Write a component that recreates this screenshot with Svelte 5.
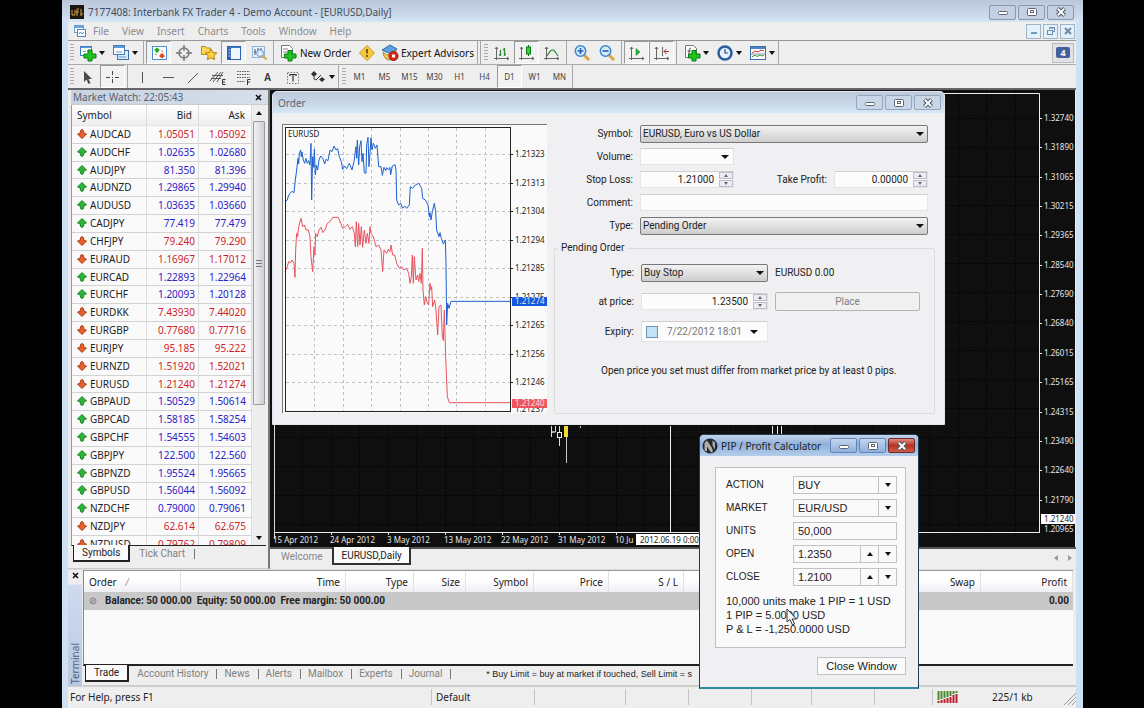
<script>
  const quotes = [
    ['AUDCAD', '1.05051', '1.05092', 0], ['AUDCHF', '1.02635', '1.02680', 1],
    ['AUDJPY', '81.350', '81.396', 1], ['AUDNZD', '1.29865', '1.29940', 1],
    ['AUDUSD', '1.03635', '1.03660', 1], ['CADJPY', '77.419', '77.479', 1],
    ['CHFJPY', '79.240', '79.290', 0], ['EURAUD', '1.16967', '1.17012', 0],
    ['EURCAD', '1.22893', '1.22964', 1], ['EURCHF', '1.20093', '1.20128', 1],
    ['EURDKK', '7.43930', '7.44020', 0], ['EURGBP', '0.77680', '0.77716', 0],
    ['EURJPY', '95.185', '95.222', 0], ['EURNZD', '1.51920', '1.52021', 0],
    ['EURUSD', '1.21240', '1.21274', 0], ['GBPAUD', '1.50529', '1.50614', 1],
    ['GBPCAD', '1.58185', '1.58254', 1], ['GBPCHF', '1.54555', '1.54603', 1],
    ['GBPJPY', '122.500', '122.560', 1], ['GBPNZD', '1.95524', '1.95665', 1],
    ['GBPUSD', '1.56044', '1.56092', 1], ['NZDCHF', '0.79000', '0.79061', 1],
    ['NZDJPY', '62.614', '62.675', 0], ['NZDUSD', '0.79762', '0.79809', 0]
  ];
  const menus = ['File', 'View', 'Insert', 'Charts', 'Tools', 'Window', 'Help'];
  const frames = ['M1', 'M5', 'M15', 'M30', 'H1', 'H4', 'D1', 'W1', 'MN'];
  const prices = ['1.32740', '1.31890', '1.31065', '1.30215', '1.29365', '1.28540', '1.27690', '1.26840', '1.26015', '1.25165', '1.24315', '1.23490', '1.22640', '1.21790'];
  const dates = ['15 Apr 2012', '24 Apr 2012', '3 May 2012', '13 May 2012', '22 May 2012', '31 May 2012', '10 Ju'];
  const ticks = ['1.21323', '1.21313', '1.21304', '1.21294', '1.21285', '1.21275', '1.21265', '1.21256', '1.21246'];
  const tabs = ['Account History', 'News', 'Alerts', 'Mailbox', 'Experts', 'Journal'];
  const askLine = '45,335 52,330 55,318 60,310 66,304 72,308 76,270 80,240 84,205 86,222 88,190 92,180 94,200 96,186 100,210 104,220 108,205 112,220 116,212 120,225 123,160 125,330 128,200 131,232 133,178 136,255 139,225 143,240 147,210 152,198 158,204 164,222 168,208 174,212 180,180 186,185 192,168 198,180 203,176 208,200 214,215 218,238 224,228 230,236 238,220 246,240 252,215 258,170 260,205 262,150 266,225 269,170 273,152 276,215 279,190 283,248 288,250 290,165 294,142 297,230 300,190 303,143 306,180 310,160 316,175 321,165 326,230 333,230 337,256 342,232 347,242 350,233 356,240 360,232 362,254 367,228 375,224 378,240 380,330 386,345 392,340 398,355 404,348 410,355 418,345 421,290 428,295 436,285 446,280 455,295 458,325 466,330 474,345 478,380 480,368 483,390 487,365 493,340 497,365 500,420 507,440 510,428 514,445 520,462 526,450 528,520 530,705 533,640 537,655 543,634 722,634';
  const bidLine = '45,545 52,530 56,515 62,518 66,510 72,520 75,562 77,480 80,430 83,440 86,410 93,385 98,410 103,405 108,420 115,420 120,440 123,500 128,545 132,470 135,495 137,430 142,440 147,420 153,412 158,428 165,420 172,400 180,395 188,382 205,382 212,400 218,415 226,410 233,403 240,418 247,410 253,430 256,470 259,395 263,470 266,400 270,465 274,410 278,472 283,420 288,460 292,430 297,460 300,410 303,430 310,440 318,470 326,465 333,480 338,545 342,480 350,490 355,478 360,485 363,465 368,495 374,495 380,520 388,535 395,530 402,540 410,535 416,550 420,580 424,560 427,495 430,580 433,500 438,570 443,555 446,575 450,550 454,580 457,475 459,600 463,645 467,620 472,640 476,645 480,580 483,600 485,590 488,650 494,630 498,660 503,735 507,650 513,645 517,740 520,752 523,660 527,800 532,920 538,938 722,938';
  let symbol = $state('EURUSD, Euro vs US Dollar');
  let stopLoss = $state('1.21000');
  let takeProfit = $state('0.00000');
  let atPrice = $state('1.23500');
</script>

{#snippet icon(name)}
  <svg class="ico" viewBox="0 0 18 18" width="18" height="18" fill="none" aria-hidden="true">
    {#if name === 'newchart'}
      <rect x="1.5" y="2.5" width="11" height="9" fill="#fff" stroke="#3f7fc0" /><path d="M2 3.5h10" stroke="#5b9bd8" /><path d="M4 7.500h3M8 7h3" stroke="#5b8" />
      <path d="M9 6h4v4h4v4h-4v3H9v-3H5v-4h4z" fill="#1fc41f" stroke="#0a7a12" />
    {:else if name === 'profiles'}
      <rect x="5.500" y="6.500" width="11" height="9" fill="#dcebfa" stroke="#3f6fa8" /><rect x="1.500" y="1.500" width="11" height="9" fill="#fff" stroke="#3f7fc0" /><path d="M2 3h10" stroke="#5b9bd8" stroke-width="2" /><path d="M4 8h6M7 13h7" stroke="#5b9bd8" />
    {:else if name === 'watch'}
      <rect x="2.500" y="2.500" width="14" height="13" fill="#fff" stroke="#4a90d8" /><path d="M7 3.500L10 6 8.500 7v1.500h-3V7L4 6z" fill="#2a2" /><path d="M12 14.500L9 12l1.500-1V9.500h3V11l1.500 1z" fill="#d42" /><path d="M5 10l2 1M11 6l2 2" stroke="#d84" />
    {:else if name === 'cross'}
      <circle cx="9" cy="9" r="5" stroke="#777" stroke-width="1.500" /><path d="M9 1v6M9 11v6M1 9h6M11 9h6" stroke="#777" stroke-width="1.500" />
    {:else if name === 'navigator'}
      <path d="M1.500 10.500v-8h4l1 1.500h4v6.500z" fill="#ffd65c" stroke="#b98a1c" /><path d="M11 5l1.800 3.500 4 .5-3 2.700.8 4L11 13.800 7.400 15.700l.8-4L5.200 9l4-.5z" fill="#ffd23c" stroke="#b07b12" />
    {:else if name === 'terminal'}
      <rect x="2.500" y="2.500" width="13" height="13" fill="#eef5fd" stroke="#2b62b0" /><path d="M4.500 3v12" stroke="#2b62b0" stroke-width="3" /><path d="M3 3.500h12" stroke="#3a7bc8" /><path d="M3.500 6h2M3.500 9h2M3.500 12h2" stroke="#cde" />
    {:else if name === 'tester'}
      <rect x="2.500" y="2.500" width="12" height="11" fill="#eaf2fa" stroke="#8fb0d0" /><path d="M5 5v6M8 4v5M11 4v4M4 8h2M7 6h2" stroke="#557" /><circle cx="10" cy="9" r="3.500" stroke="#6a9ac8" fill="#d6ecfa" fill-opacity=".7" /><path d="M12.500 11.500l4 4" stroke="#d9a63c" stroke-width="2" />
    {:else if name === 'neworder'}
      <path d="M2.500 1.500h8l3 3v9h-11z" fill="#fff" stroke="#777" /><path d="M4 5h5M4 8h6" stroke="#888" /><path d="M9 6.500h4v3.500h4v4h-4v3H9v-3H5.500v-4H9z" fill="#1fc41f" stroke="#0a7a12" />
    {:else if name === 'alert'}
      <path d="M9 1.500L16.500 9 9 16.500 1.500 9z" fill="#f7c83a" stroke="#c39a20" /><path d="M9 5v4.500M9 11v2" stroke="#5a4300" stroke-width="1.600" />
    {:else if name === 'expert'}
      <path d="M1 6l8-5 7 4-6 5z" fill="#5aa3dc" stroke="#2d6ca8" /><path d="M2 8q3 4 8 3l5-5v6q-5 6-10 3-3-3-3-7z" fill="#f4c254" stroke="#b98a2c" /><circle cx="12.500" cy="12" r="4.500" fill="#d92a1c" stroke="#a01810" /><rect x="11" y="10.500" width="3" height="3" fill="#fff" />
    {:else if name === 'bars'}
      <path d="M3.500 3v13M1 14.500h15M2 5l1.500-2L5 5M14 13l2 1.500-2 1.500" stroke="#666" /><path d="M7.500 6v6M6 11h1.500M11.500 4v8M10 5.500h1.500M11.500 10H13" stroke="#2d8a3a" stroke-width="1.300" />
    {:else if name === 'candles'}
      <path d="M3.500 3v13M1 14.500h15M2 5l1.500-2L5 5M14 13l2 1.500-2 1.500" stroke="#666" /><path d="M10.500 1v11" stroke="#0a6a1a" /><rect x="8.500" y="3" width="4" height="7" fill="#2ed43a" stroke="#0a7a12" />
    {:else if name === 'linechart'}
      <path d="M3.500 3v13M1 14.500h15M2 5l1.500-2L5 5M14 13l2 1.500-2 1.500" stroke="#666" /><path d="M4 12q4-7 6-6t5 6" stroke="#2d8a3a" stroke-width="1.200" />
    {:else if name === 'zoomin' || name === 'zoomout'}
      <path d="M11 11l5 5" stroke="#d9a63c" stroke-width="3" /><circle cx="7.500" cy="7" r="5.200" fill="#d6ecfb" stroke="#3f86c8" stroke-width="1.500" /><path d={name === 'zoomin' ? 'M4.500 7h6M7.500 4v6' : 'M4.500 7h6'} stroke="#1f5fae" stroke-width="1.600" />
    {:else if name === 'autoscroll'}
      <path d="M3.500 3v13M1 14.500h15M2 5l1.500-2L5 5M14 13l2 1.500-2 1.500" stroke="#666" /><path d="M8 4.500l4 3.500-4 3.500z" fill="#25b03a" stroke="#16802a" stroke-width=".5" />
    {:else if name === 'shift'}
      <path d="M3.500 3v13M1 14.500h15M2 5l1.500-2L5 5M14 13l2 1.500-2 1.500M9.500 3v9" stroke="#666" /><path d="M16 7.500h-5M13.500 5L11 7.500l2.500 2.500" stroke="#a33" />
    {:else if name === 'indicator'}
      <path d="M2.500 1.500h8l3 3v9h-11z" fill="#fff" stroke="#777" /><path d="M8 4q-2 0-2 3v4M4.500 7H8" stroke="#555" /><path d="M9 6.500h4v3.500h4v4h-4v3H9v-3H5.500v-4H9z" fill="#1fc41f" stroke="#0a7a12" />
    {:else if name === 'clock'}
      <circle cx="9" cy="9" r="6.500" fill="#e4f1fb" stroke="#2a5e9e" stroke-width="2.500" /><path d="M9 5v4h3" stroke="#2a4a78" stroke-width="1.200" />
    {:else if name === 'template'}
      <rect x="1.500" y="2.500" width="15" height="13" fill="#fff" stroke="#3a6ea8" /><path d="M2 4h14" stroke="#4a88c8" stroke-width="2" /><path d="M3 9l3-2 3 1 3-2 3 1" stroke="#c33" /><path d="M3 13l3-2 2 1.500 3-1.500 2 1 2-1" stroke="#2a9a3a" /><path d="M2 10h14" stroke="#89a" />
    {:else if name === 'cursor'}
      <path d="M5 3v11l2.500-2.500L9.500 16l2-1-2-4H13z" fill="#4a4a4a" />
    {:else if name === 'plus'}
      <path d="M8.500 3v4M8.500 11v4M2 9.500h4M11 9.500h4M8 9.500h1" stroke="#444" />
    {:else if name === 'vline'}
      <path d="M8.500 4v11" stroke="#555" />
    {:else if name === 'hline'}
      <path d="M4 9.500h11" stroke="#555" />
    {:else if name === 'trend'}
      <path d="M4 15L14 5" stroke="#555" />
    {:else if name === 'channel'}
      <path d="M1 13l8-9M4 14l8-10M8 14l6-10M3 7.500h11M2 10.500h10" stroke="#555" /><path d="M16.500 11.500h-3v5h3M13.500 14H16" stroke="#333" />
    {:else if name === 'fibo'}
      <path d="M3 3.500h13M3 6.500h13M3 9.500h13M3 13.500h8" stroke="#555" stroke-dasharray="1.500 1" /><path d="M16.500 11.500h-3V17M13.500 14H16" stroke="#333" />
    {:else if name === 'label'}
      <rect x="3.500" y="4.500" width="11" height="11" stroke="#777" stroke-dasharray="1.500 1.500" /><path d="M5.500 6.500h7M6 6v2M12 6v2M9 6v7.500" stroke="#333" stroke-width="1.200" />
    {:else if name === 'arrows'}
      <path d="M5 3l3 3-3 3-3-3z" fill="#333" /><path d="M5 9v2l2 1 5-5" stroke="#333" /><path d="M13 9l3 2.500-3 2.500-3-2.500z" fill="#333" />
    {/if}
  </svg>
{/snippet}

{#snippet tool(name, label, drop = false, pressed = false)}
  <button class="tool" class:drop class:pressed aria-label={label}>{@render icon(name)}{#if drop}<i class="tri"></i>{/if}</button>
{/snippet}

{#snippet controls(kind)}
  <div class="controls {kind}">
    <button aria-label="Minimize"><svg width="12" height="10" viewBox="0 0 12 10" aria-hidden="true"><rect x="1.500" y="4.500" width="9" height="3" rx="1" fill="#fff" stroke="#5b6472" /></svg></button>
    <button aria-label="Maximize"><svg width="12" height="10" viewBox="0 0 12 10" aria-hidden="true"><rect x="1.500" y="1.500" width="9" height="7" rx="1" fill="#fff" stroke="#5b6472" /><rect x="4.500" y="3.500" width="3" height="2" fill="none" stroke="#5b6472" /></svg></button>
    <button class="shut" aria-label="Close"><svg width="12" height="10" viewBox="0 0 12 10" aria-hidden="true"><path d="M2.500 1.500L9.500 8.500M9.500 1.500L2.500 8.500" stroke="#4c5563" stroke-width="4" /><path d="M2.800 1.800L9.200 8.200M9.200 1.800L2.800 8.200" stroke="#fff" stroke-width="2" /></svg></button>
  </div>
{/snippet}

{#snippet stepper(label)}
  <span class="stepper">
    <button aria-label="Increase {label}"><i class="tri up"></i></button>
    <button aria-label="Decrease {label}"><i class="tri"></i></button>
  </span>
{/snippet}

<div class="app">
  <header class="titlebar">
    <svg width="14" height="14" viewBox="0 0 14 14" aria-hidden="true"><rect width="14" height="14" fill="#1c1710" /><path d="M2 5v5h3V5M7 11V4h2M6 7h3M11 4v7M12 8v2" fill="none" stroke="#d6a648" /></svg>
    <h1>7177408: Interbank FX Trader 4 - Demo Account - [EURUSD,Daily]</h1>
    {@render controls('main')}
  </header>

  <nav class="menubar">
    <svg width="14" height="14" viewBox="0 0 14 14" fill="none" aria-hidden="true"><rect x="1.500" y="1.500" width="9" height="7" fill="#fff" stroke="#69a3da" /><path d="M1 3h10" stroke="#69a3da" stroke-width="2" /><rect x="4.500" y="5.500" width="8" height="7" fill="#fff" stroke="#4a88c8" /><path d="M6 10l1.500-2L9 10l2-2" stroke="#4a88c8" /></svg>
    {#each menus as m}<button>{m}</button>{/each}
    <div class="mdi">
      <button aria-label="Minimize chart"><svg width="10" height="10" viewBox="0 0 10 10" aria-hidden="true"><path d="M2 7h6" stroke="#6a9cc6" stroke-width="2" /></svg></button>
      <button aria-label="Restore chart"><svg width="10" height="10" viewBox="0 0 10 10" fill="none" aria-hidden="true"><path d="M3.500 3V1.500h5v4H7M3.500 2h5" stroke="#6a8cae" /><rect x="1.500" y="4.500" width="5" height="4" stroke="#6a8cae" /></svg></button>
      <button aria-label="Close chart"><svg width="10" height="10" viewBox="0 0 10 10" aria-hidden="true"><path d="M2 2l6 6M8 2L2 8" stroke="#7188a0" stroke-width="2" /></svg></button>
    </div>
  </nav>

  <div class="toolbar">
    <div class="group">
      <i class="grip"></i>
      {@render tool('newchart', 'New chart', true)}
      {@render tool('profiles', 'Profiles', true)}
      <i class="sep"></i>
      {@render tool('watch', 'Market Watch', false, true)}
      {@render tool('cross', 'Data Window')}
      {@render tool('navigator', 'Navigator')}
      {@render tool('terminal', 'Terminal', false, true)}
      {@render tool('tester', 'Strategy Tester')}
      <i class="sep"></i>
      <button class="tool wide order">{@render icon('neworder')}New Order</button>
      {@render tool('alert', 'MetaEditor')}
      <button class="tool wide expert">{@render icon('expert')}Expert Advisors</button>
      <i class="sep"></i>
    </div>
    <div class="group">
      <i class="grip"></i>
      {@render tool('bars', 'Bar chart')}
      {@render tool('candles', 'Candlesticks', false, true)}
      {@render tool('linechart', 'Line chart')}
      <i class="sep"></i>
      {@render tool('zoomin', 'Zoom in')}
      {@render tool('zoomout', 'Zoom out')}
      <i class="sep"></i>
      {@render tool('autoscroll', 'Auto scroll', false, true)}
      {@render tool('shift', 'Chart shift', false, true)}
      <i class="sep"></i>
      {@render tool('indicator', 'Indicators', true)}
      {@render tool('clock', 'Periods', true)}
      {@render tool('template', 'Templates', true)}
    </div>
    <button class="chat" aria-label="Messages"><span>4</span></button>
  </div>

  <div class="toolbar second">
    <div class="group">
      <i class="grip"></i>
      {@render tool('cursor', 'Cursor')}
      {@render tool('plus', 'Crosshair', false, true)}
      <i class="sep"></i>
      {@render tool('vline', 'Vertical line')}
      {@render tool('hline', 'Horizontal line')}
      {@render tool('trend', 'Trendline')}
      {@render tool('channel', 'Channel')}
      {@render tool('fibo', 'Fibonacci')}
      <button class="tool letter">A</button>
      {@render tool('label', 'Text label')}
      {@render tool('arrows', 'Arrows', true)}
    </div>
    <div class="group">
      <i class="grip"></i>
      {#each frames as f}<button class="tool frame" class:pressed={f === 'D1'}>{f}</button>{/each}
    </div>
  </div>

  <main class="workspace">
    <section class="market">
      <h2>Market Watch: 22:05:43 <button class="x" aria-label="Close Market Watch"><svg width="7" height="7" viewBox="0 0 7 7" aria-hidden="true"><path d="M1 1l5 5M6 1L1 6" stroke="#111" stroke-width="1.600" /></svg></button></h2>
      <div class="list">
        <div class="clip">
          <table>
            <thead><tr><th>Symbol</th><th>Bid</th><th>Ask</th></tr></thead>
            <tbody>
              {#each quotes as [name, bid, ask, up]}
                <tr class:up={up}>
                  <td class="name"><svg width="10" height="10" viewBox="0 0 10 10" aria-hidden="true"><path d={up ? 'M5 .5L9.500 5 7 5.500 6.500 8.500 5 9.500 3.500 8.500 3 5.500 .5 5z' : 'M5 9.500L9.500 5 7 4.500 6.500 1.500 5 .5 3.500 1.500 3 4.500 .5 5z'} fill={up ? '#2fb43a' : '#e8602c'} stroke={up ? '#1a8424' : '#a83c14'} /></svg>{name}</td>
                  <td>{bid}</td><td>{ask}</td>
                </tr>
              {/each}
            </tbody>
          </table>
        </div>
        <div class="scroll" aria-hidden="true"><i class="tri up"></i><div class="thumb"><i></i></div><i class="tri"></i></div>
      </div>
      <div class="tabs"><button class="on">Symbols</button><button>Tick Chart</button></div>
    </section>

    <section class="mdiarea">
      <div class="chart">
        <svg class="plot" aria-label="EURUSD daily chart">
          <defs>
            <pattern id="grid" width="57" height="29" patternUnits="userSpaceOnUse" x="4" y="28"><path d="M0 .5h57M.5 0v29M28.500 0v29" stroke="#040404" stroke-width="1" stroke-dasharray="3 2" /></pattern>
          </defs>
          <rect width="100%" height="442" fill="url(#grid)" />
          <path d="M4.500 3v446" stroke="#d8d8d8" />
          <path d="M281.500 336v11M285.500 336v6h-4M281.500 342h3" stroke="#ddd" fill="none" />
          <path d="M289.500 336v20" stroke="#ddd" /><rect x="287.500" y="342.500" width="4" height="5" fill="#111" stroke="#eee" />
          <path d="M296.500 336v37M310.500 336v2" stroke="#ccc" /><rect x="294" y="336" width="4" height="11" fill="#f2dc2e" />
          <path d="M400.500 336v106M502.500 336v10M507.500 336v10M511.500 336v10" stroke="#eee" />
          {#each dates as d, i}
            <path d="M{4.5 + i * 57} 442v3" stroke="#ddd" /><text x={3 + i * 57} y="453">{d}</text>
          {/each}
          <rect x="366" y="444" width="80" height="11" fill="#fff" /><text x="370" y="453" class="dark">2012.06.19 0:00</text>
          <rect x="4" y="442" width="100%" height="1" fill="#eee" />
          <svg x="100%" overflow="visible">
            <rect x="-35" y="0" width="35" height="458" fill="#0f0f0f" />
            <rect x="-36" y="443" width="36" height="15" fill="#0f0f0f" />
            <path d="M-700 3.500H-35.500V442" stroke="#eee" fill="none" />
            {#each prices as p, i}
              <path d="M-35 {28 + Math.round(i * 29.35)}.5h2" stroke="#eee" /><text x="-31" y={31 + Math.round(i * 29.35)}>{p}</text>
            {/each}
            <text x="-31" y="442">1.20965</text>
            <rect x="-34" y="424" width="34" height="10" fill="#fff" /><text x="-31" y="432" class="dark">1.21240</text>
          </svg>
        </svg>

        <section class="dialog" aria-label="Order">
          <header><h2>Order</h2>{@render controls('inactive')}</header>
          <div class="orderbody">
            <svg class="tickchart" width="265" height="289" aria-label="EURUSD ticks">
              <path d="M0 289V.5h265M.5 0v289" stroke="#777" fill="none" />
              <rect x="1" y="1" width="264" height="288" fill="#fafafb" />
              <g stroke="#c2c2c6" stroke-dasharray="3 3">
                {#each [32, 61, 89, 118, 146, 174, 203] as x}<path d="M{x}.5 4v283" />{/each}
                {#each ticks as t, i}<path d="M4 {30 + Math.round(i * 28.5)}.5h225" />{/each}
              </g>
              <g fill="none" transform="translate(-12 -34) scale(.33333)">
                <polyline points={bidLine} stroke="#e8525c" stroke-width="3" />
                <polyline points={askLine} stroke="#1c5fd0" stroke-width="3" />
              </g>
              <rect x="3.500" y="3.500" width="225" height="284" fill="none" stroke="#222" />
              <text x="6" y="13" class="dark">EURUSD</text>
              {#each ticks as t, i}
                <path d="M229 {30 + Math.round(i * 28.5)}.5h2" stroke="#222" /><text x="233" y={33 + Math.round(i * 28.5)} class="dark">{t}</text>
              {/each}
              <text x="233" y="288" class="dark">1.21237</text>
              <rect x="230" y="173" width="35" height="9" fill="#1558e0" /><text x="233" y="180">1.21274</text>
              <rect x="230" y="275" width="35" height="9" fill="#f2525c" /><text x="233" y="282">1.21240</text>
            </svg>
            <form onsubmit={(e) => e.preventDefault()}>
              <div class="fields">
                <label for="sym">Symbol:</label>
                <span class="pick span"><select id="sym" bind:value={symbol}><option>EURUSD, Euro vs US Dollar</option></select></span>
                <label for="vol">Volume:</label>
                <span class="pick flat"><input id="vol" /></span>
                <label for="sl">Stop Loss:</label>
                <span class="num"><input id="sl" bind:value={stopLoss} />{@render stepper('stop loss')}</span>
                <label for="tp">Take Profit:</label>
                <span class="num"><input id="tp" bind:value={takeProfit} />{@render stepper('take profit')}</span>
                <label for="com">Comment:</label>
                <input id="com" class="box span" />
                <label for="typ">Type:</label>
                <span class="pick span"><select id="typ"><option>Pending Order</option></select></span>
              </div>
              <fieldset>
                <legend>Pending Order</legend>
                <div class="pending">
                  <label for="ptyp">Type:</label>
                  <span class="pick"><select id="ptyp"><option>Buy Stop</option></select></span>
                  <span>EURUSD 0.00</span>
                  <label for="at">at price:</label>
                  <span class="num"><input id="at" bind:value={atPrice} />{@render stepper('price')}</span>
                  <button class="place" disabled>Place</button>
                  <label for="exp">Expiry:</label>
                  <span class="pick flat expiry"><input type="checkbox" id="exp" /><input class="when" value="7/22/2012 18:01" aria-label="Expiry date" /></span>
                </div>
                <p>Open price you set must differ from market price by at least 0 pips.</p>
              </fieldset>
            </form>
          </div>
        </section>
      </div>
      <div class="charttabs"><button>Welcome</button><button class="on">EURUSD,Daily</button><span class="arrows" aria-hidden="true"><i class="tri left"></i><i class="tri right"></i></span></div>
    </section>
  </main>

  <section class="terminal">
    <div class="side"><button class="x" aria-label="Close Terminal"><svg width="7" height="7" viewBox="0 0 7 7" aria-hidden="true"><path d="M1 1l5 5M6 1L1 6" stroke="#111" stroke-width="1.600" /></svg></button><h2>Terminal</h2></div>
    <div class="trades">
      <div class="tablebox">
        <table>
          <colgroup><col class="c97" /><col class="c165" /><col class="c68" /><col class="c52" /><col class="c68" /><col class="c75" /><col class="c75" /><col /><col class="c82" /><col class="c92" /></colgroup>
          <thead><tr><th>Order <em>/</em></th><th>Time</th><th>Type</th><th>Size</th><th>Symbol</th><th>Price</th><th>S / L</th><th></th><th>Swap</th><th>Profit</th></tr></thead>
          <tbody><tr><td colspan="9"><svg width="8" height="8" viewBox="0 0 8 8" aria-hidden="true"><circle cx="4" cy="4" r="3" fill="#b4b4b4" stroke="#8a8a8a" /><path d="M2.500 5.500l3-3" stroke="#888" /></svg>Balance: 50 000.00&nbsp; Equity: 50 000.00&nbsp; Free margin: 50 000.00</td><td>0.00</td></tr></tbody>
        </table>
      </div>
      <div class="tabs"><button class="on">Trade</button>{#each tabs as t}<button>{t}</button>{/each}<span class="note">* Buy Limit = buy at market if touched, Sell Limit = s</span></div>
    </div>
  </section>

  <footer class="status">
    <span class="help">For Help, press F1</span><span class="prof">Default</span>
    <i class="c91"></i><i class="c63"></i><i class="c63"></i><i class="c60"></i><i class="c63"></i><i class="c58"></i>
    <span class="net">
      <svg width="22" height="12" viewBox="0 0 22 12" aria-hidden="true"><path d="M1.500 0v9M4.500 0v8M7.500 0v7M10.500 0v6M13.500 0v5M16.500 0v3M19.500 0v2" stroke="#4e8a2e" stroke-width="2" /><path d="M1.500 10v2M4.500 9v3M7.500 8v4M10.500 7v5M13.500 6v6M16.500 4v8M19.500 3v9" stroke="#b8202c" stroke-width="2" /></svg>
      225/1 kb
    </span>
    <svg class="grow" width="12" height="13" viewBox="0 0 12 13" aria-hidden="true"><path d="M0 13L12 1M4 13l8-8M8 13l4-4" stroke="#9a9a9a" /></svg>
  </footer>

  <section class="calc" aria-label="PIP / Profit Calculator">
    <header>
      <svg width="16" height="16" viewBox="0 0 16 16" aria-hidden="true"><circle cx="8" cy="8" r="7.500" fill="#222a33" /><path d="M2.500 12.500V5l2.500-2.500 5 7.500 1 3.500-2 1-4-6v5zM10.500 2.500L13 4.500v7l-2.500-4z" fill="#b4aeaa" /></svg>
      <h2>PIP / Profit Calculator</h2>{@render controls('active')}
    </header>
    <div class="calcbody">
      <div class="panel">
        <label for="ca">ACTION</label>
        <span class="field"><input id="ca" value="BUY" /><button aria-label="Choose action"><i class="tri"></i></button></span>
        <label for="cm">MARKET</label>
        <span class="field"><input id="cm" value="EUR/USD" /><button aria-label="Choose market"><i class="tri"></i></button></span>
        <label for="cu">UNITS</label>
        <span class="field"><input id="cu" value="50,000" /></span>
        <label for="co">OPEN</label>
        <span class="field"><input id="co" value="1.2350" /><button aria-label="Raise open"><i class="tri up"></i></button><button aria-label="Lower open"><i class="tri"></i></button></span>
        <label for="cc">CLOSE</label>
        <span class="field"><input id="cc" value="1.2100" /><button aria-label="Raise close"><i class="tri up"></i></button><button aria-label="Lower close"><i class="tri"></i></button></span>
        <p>10,000 units make 1 PIP = 1 USD<br />1 PIP = 5.0000 USD<br />P &amp; L = -1,250.0000 USD</p>
      </div>
      <button class="closewin">Close Window</button>
    </div>
    <svg class="pointer" width="12" height="18" viewBox="0 0 12 18" aria-hidden="true"><path d="M1 1v13l3-2.500L6.500 17l2-1-2.300-5H10.500z" fill="#fff" stroke="#333" /></svg>
  </section>
</div>

<style>
  :global(body) { background: #000; }
  :global(#app) { padding: 0 61px 0 62px; }
  .app, .app :global(*) { box-sizing: border-box; }
  .app {
    position: relative; display: flex; flex-direction: column; height: 100vh; overflow: hidden;
    padding: 0 7px 0 6px; background: #cfe0f2;
    font: 10px/14px "Noto Sans", "Open Sans", sans-serif; color: #222;
  }
  h1, h2, p { margin: 0; font-size: inherit; font-weight: normal; }
  button, input, select { font: inherit; color: inherit; margin: 0; padding: 0; border: 0; border-radius: 0; background: none; outline: none; min-width: 0; }
  svg { flex: none; }
  .ico { display: block; }
  .tri { flex: none; display: block; width: 0; height: 0; border: 3px solid transparent; border-top: 4px solid #111; border-bottom: 0; }
  .tri.up { border-top: 0; border-bottom: 4px solid #111; }

  .titlebar { flex: none; height: 22px; padding-bottom: 0; margin: 0 -7px 0 -6px; padding: 2px 9px 0 8px; display: flex; align-items: center; gap: 4px; background: linear-gradient(#bac7d9, #cbdaea 70%, #d4e6f6); }
  .titlebar h1 { flex: 1; color: #444e5c; white-space: nowrap; }
  .controls { display: flex; gap: 2px; }
  .controls button { width: 27px; height: 15px; display: grid; place-items: center; border: 1px solid #8797b0; border-radius: 2px; background: #c3d0e2; }
  .controls.inactive button { border-color: #94a6c0; background: #c8d6e8; }
  .controls.active button { border-color: #6785b4; background: linear-gradient(#c4d6ee, #8fb0dc); }
  .controls.active .shut { border-color: #6e2a2c; background: linear-gradient(#dc8c80, #b93324 50%, #cf5d44); }

  .menubar { flex: none; height: 19px; padding: 0 1px 0 5px; display: flex; align-items: center; background: #efeeef; border-bottom: 1px solid #999; color: #8c8c8c; }
  .menubar > button { padding: 0 7px 1px 6px; }
  .mdi { margin-left: auto; display: flex; gap: 2px; }
  .mdi button { width: 15px; height: 15px; display: grid; place-items: center; border: 1px solid #9fb4c8; background: #e3f1fb; }

  .toolbar { flex: none; height: 24px; padding-left: 2px; display: flex; gap: 3px; background: #efeeef; border-bottom: 1px solid #aaa; }
  .toolbar.second { height: 25px; border-bottom: 2px solid #66666a; }
  .group { display: flex; align-items: stretch; border-right: 1px solid #a8a8a8; }
  .grip { width: 4px; margin: 3px 1px 3px 0; background: repeating-linear-gradient(#aaa 0 1px, #efeeef 1px 3px); }
  .sep { width: 5px; border-right: 2px solid #efeeef; background: linear-gradient(90deg, transparent 2px, #a8a8a8 2px 3px, transparent 3px); }
  .sep:last-child { border-right: 0; }
  .tool { width: 25px; display: flex; align-items: center; justify-content: center; border: 1px solid transparent; white-space: nowrap; }
  .drop { width: 33px; gap: 2px; }
  .pressed { border-color: #999 #fff #fff #999; background: #f3f2f3; }
  .wide { justify-content: flex-start; gap: 3px; padding-left: 2px; color: #111; }
  .order { width: 78px; }
  .expert { width: 96px; gap: 2px; padding-left: 1px; }
  .letter { color: #333; font-weight: 600; }
  .frame { font-size: 8px; color: #444; }
  .chat { align-self: center; margin: 0 2px 0 auto; width: 22px; height: 20px; display: grid; place-items: center; border: 1px solid #bbb; background: #e2e2e6; }
  .chat span { width: 14px; height: 11px; border-radius: 2px; background: #41609c; color: #fff; font-size: 9px; line-height: 11px; font-weight: bold; }

  .workspace { flex: 1; min-height: 0; display: flex; background: #efeeef; }
  .market { flex: none; width: 202px; padding-left: 3px; display: flex; flex-direction: column; border-right: 2px solid #777; border-bottom: 1px solid #ccc; }
  .market h2 { height: 15px; padding: 0 5px 0 2px; display: flex; align-items: center; justify-content: space-between; background: linear-gradient(90deg, #c9d3e0, #d6deea); border-bottom: 1px solid #ccc; color: #566070; }
  .x { display: grid; place-items: center; width: 9px; height: 11px; }
  .list { flex: 1; min-height: 0; display: flex; border-left: 1px solid #999; margin-right: 2px; border-bottom: 1px solid #222; }
  .clip { flex: 1; overflow: hidden; background: #fbfafb; }
  table { border-collapse: separate; border-spacing: 0; table-layout: fixed; width: 100%; }
  .market table { height: 449px; }
  .market th, .market td { padding: 0 3px; text-align: right; line-height: 13px; border-right: 1px solid #dcdcdc; border-bottom: 1px solid #d2d2d2; }
  .market th { height: 21px; padding-right: 6px; border-bottom-color: #e4e4e4; font-weight: normal; color: #222; background: linear-gradient(#fff, #eeeef2); }
  .market th:first-child, .market td:first-child { width: 75px; padding-left: 5px; text-align: left; }
  .market th:nth-child(2) { width: 52px; }
  .market td { color: #cc1f2a; }
  .market td:nth-child(3) { padding-right: 5px; }
  .market td svg { margin-right: 3px; vertical-align: -1px; }
  .market .up td { color: #2a22c4; }
  .market tr td.name { color: #222; }
  .scroll { width: 14px; display: flex; flex-direction: column; align-items: center; padding: 6px 0 5px; gap: 6px; background: #ededee; }
  .thumb { width: 12px; flex: none; height: 284px; display: grid; place-items: center; border: 1px solid #9a9aa0; border-radius: 1px; background: linear-gradient(90deg, #f2f2f4, #cfcfd4); }
  .thumb i { width: 6px; height: 7px; background: repeating-linear-gradient(#777 0 1px, transparent 1px 3px); }
  .scroll > .tri:last-child { margin-top: auto; }
  .tabs { flex: none; display: flex; height: 22px; padding-left: 2px; font-family: Roboto, sans-serif; }
  .tabs button { position: relative; height: 16px; padding: 0 9px; color: #808080; line-height: 14px; white-space: nowrap; }
  .tabs button:not(.on)::after { content: ""; position: absolute; right: -1px; top: 3px; height: 10px; border-right: 1px solid #777; }
  .tabs .on { padding: 0 8px; margin-top: -1px; height: 17px; background: #fbfafb; border: 1px solid #222; border-width: 0 2px 2px 1px; color: #222; }

  .mdiarea { flex: 1; min-width: 0; display: flex; flex-direction: column; }
  .chart { position: relative; flex: 1; min-height: 0; background: #0f0f0f; margin-right: 1px; }
  .plot { display: block; width: 100%; height: 100%; }
  .plot text, .tickchart text { font-family: "Noto Sans", sans-serif; font-size: 8px; fill: #e6e6e6; }
  .plot .dark, .tickchart .dark { fill: #222; }
  .charttabs { flex: none; height: 22px; display: flex; align-items: flex-start; border-top: 2px solid #555; padding-right: 4px; font-family: Roboto, sans-serif; }
  .charttabs button { height: 16px; padding: 0 10px 0 11px; color: #888; }
  .charttabs .on { margin-top: -2px; height: 18px; padding: 2px 7px 0; border: 2px solid #333; border-width: 0 2px 2px; background: #fbfafb; color: #222; }
  .arrows { margin: 6px 0 0 auto; display: flex; gap: 10px; }
  .tri.left { border: 3px solid transparent; border-right: 4px solid #999; border-left: 0; }
  .tri.right { border: 3px solid transparent; border-left: 4px solid #999; border-right: 0; }

  .dialog { position: absolute; left: 2px; top: 1px; width: 673px; border: 1px solid #dfe6f0; border-radius: 5px 5px 0 0; background: #f0eff1; overflow: hidden; font-family: Roboto, sans-serif; }
  .dialog header { height: 21px; padding: 0 3px 0 5px; display: flex; align-items: center; justify-content: space-between; background: linear-gradient(#bfcadb, #c6d6e6 50%, #d6e6f4); color: #5c6675; font-family: "Noto Sans", sans-serif; }
  .orderbody { display: flex; gap: 7px; padding: 11px 9px 10px; }
  form { flex: 1; }
  .fields { display: grid; grid-template-columns: 79px 94px 1fr 94px; grid-auto-rows: 19px; gap: 4px 7px; align-items: center; padding-right: 7px; }
  form label { text-align: right; white-space: nowrap; }
  .fields label { grid-column: 1; }
  .fields label[for="tp"] { grid-column: 3; }
  .span { grid-column: 2 / 5; }
  .pick { position: relative; display: flex; height: 18px; }
  .pick::after { content: ""; position: absolute; right: 4px; top: 7px; border: 4px solid transparent; border-top-color: #111; border-bottom: 0; pointer-events: none; }
  .pick select { appearance: none; flex: 1; padding: 0 2px; border: 1px solid #777; border-radius: 2px; background: linear-gradient(#f2f2f2, #e0e0e0 50%, #cdcdcd); }
  .pick.flat, .box, .num { height: 17px; background: #fcfcfc; border: 1px solid #e4e3e6; border-top-color: #cfcfd2; }
  .pick.flat input { width: 100%; }
  .pick.flat::after { top: 6px; }
  .num { display: flex; }
  .num input { flex: 1; text-align: right; padding-right: 5px; }
  .stepper { width: 14px; display: flex; flex-direction: column; gap: 1px; }
  .stepper button { flex: 1; display: grid; place-items: center; border: 1px solid #bcbcc8; background: #ececf2; }
  .stepper .tri { border-width: 3px 2px 0; border-top-color: #667; }
  .stepper .tri.up { border-width: 0 2px 3px; border-bottom-color: #667; }
  fieldset { height: 173px; margin: 6px 0 0; padding: 0; border: 1px solid #dcdbde; border-radius: 2px; min-width: 0; }
  legend { margin-left: 3px; padding: 0 3px; }
  .pending { display: grid; grid-template-columns: 79px 127px 145px; grid-template-rows: 19px 19px 21px; gap: 10px 7px; align-items: center; padding-top: 8px; }
  .place { height: 19px; border: 1px solid #b4b4b6; border-radius: 2px; color: #808080; background: #f1f0f1; }
  .pick.expiry { height: 21px; align-items: center; padding-left: 4px; color: #777; gap: 9px; }
  .pick.expiry::after { right: 9px; top: 8px; }
  .expiry input[type="checkbox"] { appearance: none; flex: none; width: 12px; height: 12px; border: 1px solid #6a94b8; background: #c3e2f6; }
  fieldset p { margin: 22px 0 0; padding-left: 46px; }

  .terminal { flex: none; height: 117px; display: flex; background: #efeeef; border-top: 1px solid #ddd; }
  .side { width: 14px; margin-right: 1px; display: flex; flex-direction: column; align-items: center; justify-content: space-between; padding-bottom: 2px; background: linear-gradient(#efeeef 14px, #cfdaf0 15px, #b9c9e2); }
  .side h2 { writing-mode: vertical-rl; transform: rotate(180deg); line-height: 13px; color: #4f6480; }
  .trades { flex: 1; min-width: 0; display: flex; flex-direction: column; padding-right: 3px; border-bottom: 1px solid #ccc; }
  .tablebox { flex: 1; background: #fbfafb; border-left: 1px solid #888; border-top: 1px solid #999; border-bottom: 2px solid #222; }
  .trades th { height: 21px; padding: 0 5px; text-align: right; font-weight: normal; background: linear-gradient(#fff 40%, #eeeef4); border-right: 1px solid #e2e2e6; }
  .trades th:first-child { text-align: left; }
  .trades em { margin-left: 6px; color: #999; }
  .trades td { height: 18px; padding: 0 5px; background: #c8c8c8; font-weight: bold; font-family: Roboto, sans-serif; }
  .trades td:last-child { text-align: right; padding-right: 4px; }
  .trades td svg { margin-right: 8px; vertical-align: -1px; }
  .c97 { width: 97px; } .c165 { width: 165px; } .c68 { width: 68px; } .c52 { width: 52px; } .c75 { width: 75px; } .c82 { width: 82px; } .c92 { width: 92px; }
  .c91 { width: 91px; } .c63 { width: 63px; } .c60 { width: 60px; } .c58 { width: 58px; }
  .trades .tabs { height: 19px; }
  .trades .tabs button { padding: 0 8px; }
  .note { margin-left: 36px; font: 9px/16px "Liberation Sans", sans-serif; color: #222; white-space: nowrap; }

  .status { flex: none; height: 22px; padding: 3px 0 3px 2px; display: flex; align-items: center; background: #efeeef; box-shadow: inset 0 1px #d0d0d0; }
  .status > span, .status > i { align-self: stretch; display: flex; align-items: center; padding-left: 4px; border-left: 1px solid #c4c4c4; }
  .status .help { flex: 1; padding-left: 0; border: 0; }
  .status .prof { width: 103px; }
  .status .net { width: 132px; gap: 33px; }
  .grow { align-self: flex-end; }

  .calc { position: absolute; left: 637px; top: 434px; width: 220px; border: 1px solid #1f3d4e; border-bottom: 2px solid #2f8a9c; border-radius: 5px 5px 0 0; background: #f0eff1; font-family: "Liberation Sans", sans-serif; font-size: 11px; }
  .calc header { height: 21px; padding: 0 3px 0 2px; display: flex; align-items: center; gap: 3px; border-radius: 4px 4px 0 0; background: linear-gradient(#c4d4ea, #8eb0dc 45%, #b4cdea); font: 10px/14px "Noto Sans", sans-serif; }
  .calc h2 { flex: 1; white-space: nowrap; }
  .calcbody { padding: 11px 12px 12px 15px; display: flex; flex-direction: column; align-items: flex-end; gap: 9px; }
  .panel { align-self: stretch; height: 181px; padding: 8px 8px 0 10px; display: grid; grid-template-columns: 67px 1fr; grid-auto-rows: 18px; gap: 5px 0; align-items: center; align-content: start; border: 1px solid #c2c2c6; background: #fbfafb; }
  .panel label { font-size: 10px; }
  .field { height: 18px; display: flex; border: 1px solid #c2c2c6; }
  .field input { flex: 1; width: 0; padding-left: 4px; }
  .field button { width: 18px; display: grid; place-items: center; border-left: 1px solid #c2c2c6; }
  .panel p { grid-column: 1 / 3; align-self: start; white-space: nowrap; padding-top: 3px; }
  .closewin { width: 89px; height: 18px; border: 1px solid #c2c2c6; background: #fbfafb; }
  .pointer { position: absolute; left: 86px; top: 173px; }
</style>
